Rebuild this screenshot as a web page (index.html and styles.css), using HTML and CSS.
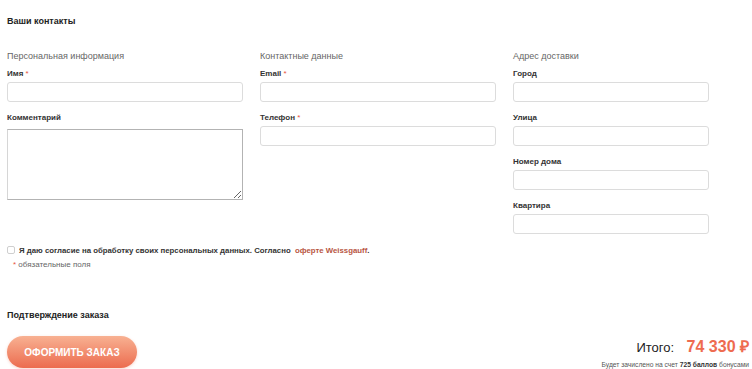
FILE: index.html
```html
<!DOCTYPE html>
<html lang="ru">
<head>
    <meta charset="UTF-8">
    <meta name="viewport" content="width=device-width, initial-scale=1.0">
    <title>Оформление заказа</title>
    <link rel="stylesheet" href="styles.css">
</head>
<body>
    <div class="checkout">
        <h2 class="block-title">Ваши контакты</h2>

        <div class="contacts">
            <div class="group">
                <h3 class="group-title">Персональная информация</h3>
                <div class="field">
                    <label class="field-label">Имя <span class="req">*</span></label>
                    <input class="field-input" type="text">
                </div>
                <div class="field">
                    <label class="field-label">Комментарий</label>
                    <textarea class="field-textarea"></textarea>
                </div>
            </div>

            <div class="group">
                <h3 class="group-title">Контактные данные</h3>
                <div class="field">
                    <label class="field-label">Email <span class="req">*</span></label>
                    <input class="field-input" type="text">
                </div>
                <div class="field">
                    <label class="field-label">Телефон <span class="req">*</span></label>
                    <input class="field-input" type="text">
                </div>
            </div>

            <div class="group">
                <h3 class="group-title">Адрес доставки</h3>
                <div class="field">
                    <label class="field-label">Город</label>
                    <input class="field-input" type="text">
                </div>
                <div class="field">
                    <label class="field-label">Улица</label>
                    <input class="field-input" type="text">
                </div>
                <div class="field">
                    <label class="field-label">Номер дома</label>
                    <input class="field-input" type="text">
                </div>
                <div class="field">
                    <label class="field-label">Квартира</label>
                    <input class="field-input" type="text">
                </div>
            </div>
        </div>

        <label class="consent"><span class="checkbox"></span>Я даю согласие на обработку своих персональных данных. Согласно&nbsp; <a href="#" class="consent-link">оферте Weissgauff</a>.</label>
        <p class="required-note"><span class="req">*</span> обязательные поля</p>

        <h2 class="block-title confirm-title">Подтверждение заказа</h2>

        <div class="order-row">
            <button class="btn-order">ОФОРМИТЬ ЗАКАЗ</button>
            <div class="total">
                <div class="total-sum">
                    <span class="total-label">Итого:</span>
                    <span class="total-price">74 330 ₽</span>
                </div>
                <p class="bonus">Будет зачислено на счет <b>725 баллов</b> бонусами</p>
            </div>
        </div>
    </div>
</body>
</html>
```

FILE: styles.css
```css
:root {
    --text-color: #222;
    --muted-color: #666;
    --accent-color: #ee6b50;
    --link-color: #b8563f;
    --border-color: #dcdcdc;
}

* {
    box-sizing: border-box;
}

body {
    margin: 0;
    font-family: 'Liberation Sans', Arial, sans-serif;
    color: var(--text-color);
    background-color: white;
}

.checkout {
    padding: 14px 3px 0 7px;
}

.block-title {
    font-size: 9px;
    font-weight: bold;
    line-height: 14px;
    margin: 0;
}

.contacts {
    display: grid;
    grid-template-columns: 236px 236px 196px;
    column-gap: 17px;
    margin-top: 21px;
}

.group-title {
    font-size: 9px;
    font-weight: normal;
    color: var(--muted-color);
    line-height: 14px;
    margin: 0 0 5px;
}

.field {
    margin-bottom: 10px;
}

.field-label {
    display: block;
    font-size: 8px;
    font-weight: bold;
    line-height: 12px;
    color: #333;
    margin-bottom: 2px;
}

.req {
    color: #e8553f;
    font-weight: normal;
}

.field-input {
    display: block;
    width: 100%;
    height: 20px;
    border: 1px solid var(--border-color);
    border-radius: 3px;
    background-color: white;
    padding: 0 6px;
}

.field-textarea {
    display: block;
    width: 100%;
    height: 71px;
    margin-top: 5px;
    border: 1px solid #b3b3b3;
    border-left-color: #d6d6d6;
    border-radius: 0;
    resize: vertical;
}

.consent {
    display: block;
    font-size: 7.8px;
    font-weight: bold;
    line-height: 12px;
    color: #333;
    margin-top: 1px;
}

.checkbox {
    display: inline-block;
    width: 8px;
    height: 8px;
    border: 1px solid #cfcfcf;
    border-radius: 2px;
    margin-right: 4px;
    vertical-align: -1px;
}

.consent-link {
    color: var(--link-color);
    text-decoration: none;
}

.required-note {
    font-size: 8px;
    line-height: 12px;
    color: var(--muted-color);
    margin: 2px 0 0 6px;
}

.confirm-title {
    margin-top: 37px;
}

.order-row {
    display: flex;
    justify-content: space-between;
    align-items: flex-start;
    margin-top: 14px;
}

.btn-order {
    width: 130px;
    height: 32px;
    border: none;
    border-radius: 16px;
    background: linear-gradient(#f8b192, #ec6c4f);
    box-shadow: 0 1px 3px rgba(236, 108, 79, 0.3);
    color: white;
    font-family: inherit;
    font-size: 10px;
    font-weight: bold;
    padding: 0;
    cursor: pointer;
}

.total {
    text-align: right;
    padding-top: 1px;
}

.total-sum {
    line-height: 20px;
}

.total-label {
    font-size: 13px;
    color: #222;
    margin-right: 8px;
}

.total-price {
    font-size: 16px;
    font-weight: bold;
    color: var(--accent-color);
}

.bonus {
    font-size: 6.7px;
    color: #555;
    margin: 2px 0 0;
    line-height: 10px;
}

.bonus b {
    color: #333;
}
```
